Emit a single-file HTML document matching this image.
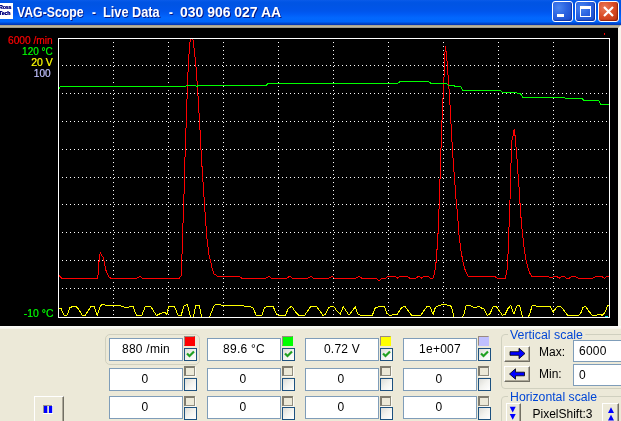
<!DOCTYPE html>
<html><head><meta charset="utf-8"><title>VAG-Scope</title>
<style>
html,body{margin:0;padding:0;}
body{width:621px;height:421px;overflow:hidden;position:relative;background:#ece9d8;font-family:"Liberation Sans",Arial,sans-serif;}
#tb{position:absolute;left:0;top:0;width:621px;height:25px;background:linear-gradient(to bottom,#0a5be8 0px,#0055e5 2px,#0054e3 4px,#0055eb 11px,#005bf5 14px,#0268fe 18px,#0066fb 21.5px,#0052dc 23px,#003cc0 24px,#0036b4 25px);}
#tb .t{position:absolute;top:4px;height:16px;line-height:16px;font-weight:bold;font-size:14px;color:#fff;white-space:nowrap;transform-origin:0 50%;text-shadow:1px 1px 0 #0a1883;}
#ico{position:absolute;left:0;top:3px;width:13px;height:16px;background:#fff;overflow:hidden;}
#ico span{position:absolute;left:-1px;font-size:5.4px;line-height:6px;font-weight:bold;color:#000080;white-space:nowrap;letter-spacing:-0.25px;text-shadow:0 0 .5px #000080}
.wb{position:absolute;top:1px;width:19px;height:19px;border:1px solid #fff;border-radius:3px;background:radial-gradient(circle at 30% 30%,#4a86f0 0%,#2a62e0 45%,#1848c8 100%);box-shadow:inset -1px -1px 1px rgba(0,20,120,.5);}
.wb.close{background:radial-gradient(circle at 30% 30%,#ea7a58 0%,#d84a24 50%,#b83010 100%);box-shadow:inset -1px -1px 1px rgba(90,10,0,.5);}
#edge{position:absolute;left:0;top:25px;width:621px;height:304px;background:#fff;}
#edge .top{position:absolute;left:0;top:0;width:621px;height:3px;background:linear-gradient(to bottom,#aaa48e 0,#aaa48e 1px,#bcb59e 1px,#bcb59e 2px,#a09a86 2px,#a09a86 3px);}
#edge .r{position:absolute;left:618px;top:0px;width:3px;height:304px;background:#f6f4ec;clip-path:polygon(100% 0,100% 100%,0 100%,0 3px);}
#edge .b{position:absolute;left:0;top:301px;width:621px;height:3px;background:linear-gradient(to bottom,#fdfdfa,#f4f2e8);}
#scope{position:absolute;left:0;top:28px;display:block}
.inp{position:absolute;width:72px;height:21px;border:1px solid #7f9db9;background:#fff;font-size:12px;line-height:20px;text-align:center;color:#000;letter-spacing:.25px;}
.sw{position:absolute;width:8px;height:7px;border-style:solid;border-width:2px 1px 1px 2px;border-color:#7f7c6f #918e80 #918e80 #7f7c6f;background:#ece9d8;box-shadow:1px 1px 0 #faf9f3;}
.cb{position:absolute;width:11px;height:11px;border:1px solid #1c5180;background:linear-gradient(135deg,#dcdcd7 0%,#f3f3ef 50%,#fff 100%);}
.cb svg{position:absolute;left:0;top:0}
.grp{position:absolute;border:1px solid #d0d0bf;border-radius:4px;}
.gl{position:absolute;font-size:12px;line-height:12px;color:#0046d5;background:#ece9d8;padding:0 2px;white-space:nowrap;transform-origin:0 50%;}
.lbl{position:absolute;font-size:12px;line-height:14px;color:#000;white-space:nowrap;}
.btn{position:absolute;background:#ece9d8;border:1px solid;border-color:#fff #716f64 #716f64 #fff;box-shadow:inset -1px -1px 0 #aca899;}
.btn svg{position:absolute;left:0;top:0}
#all{position:absolute;left:0;top:0;width:621px;height:421px;will-change:transform;}
</style></head><body><div id="all">
<div id="tb">
<div id="ico"><span style="top:0.8px">Ross</span><span style="top:7.1px">Tech</span></div>
<span class="t" style="left:17px;transform:scaleX(.875)">VAG-Scope</span>
<span class="t" style="left:92px;transform:scaleX(.85)">-</span>
<span class="t" style="left:102.6px;transform:scaleX(.91)">Live Data</span>
<span class="t" style="left:168.7px;transform:scaleX(.85)">-</span>
<span class="t" style="left:180px;transform:scaleX(.997)">030 906 027 AA</span>
<div class="wb" style="left:552px"><svg width="19" height="19"><rect x="4" y="12" width="7" height="3" fill="#fff"/></svg></div>
<div class="wb" style="left:575px"><svg width="19" height="19"><rect x="4.5" y="5.5" width="10" height="9" fill="none" stroke="#fff" stroke-width="1"/><rect x="4" y="4" width="11" height="3" fill="#fff"/></svg></div>
<div class="wb close" style="left:598px"><svg width="19" height="19"><path d="M5 5 L14 14 M14 5 L5 14" stroke="#fff" stroke-width="2.2" fill="none"/></svg></div>
</div>
<div id="edge"><div class="top"></div><div class="r"></div><div class="b"></div></div>
<svg id="scope" width="618" height="298" viewBox="0 28 618 298" shape-rendering="crispEdges">
<rect x="0" y="28" width="618" height="298" fill="#000"/>
<g stroke="#fff" stroke-width="1" stroke-dasharray="1 3" fill="none"><line x1="113.5" y1="42" x2="113.5" y2="317" /><line x1="168.5" y1="42" x2="168.5" y2="317" /><line x1="223.5" y1="42" x2="223.5" y2="317" /><line x1="278.5" y1="42" x2="278.5" y2="317" /><line x1="333.5" y1="42" x2="333.5" y2="317" /><line x1="388.5" y1="42" x2="388.5" y2="317" /><line x1="443.5" y1="42" x2="443.5" y2="317" /><line x1="498.5" y1="42" x2="498.5" y2="317" /><line x1="553.5" y1="42" x2="553.5" y2="317" /><line x1="62" y1="65.5" x2="609" y2="65.5" /><line x1="62" y1="93.5" x2="609" y2="93.5" /><line x1="62" y1="121.5" x2="609" y2="121.5" /><line x1="62" y1="149.5" x2="609" y2="149.5" /><line x1="62" y1="177.5" x2="609" y2="177.5" /><line x1="62" y1="204.5" x2="609" y2="204.5" /><line x1="62" y1="232.5" x2="609" y2="232.5" /><line x1="62" y1="260.5" x2="609" y2="260.5" /><line x1="62" y1="288.5" x2="609" y2="288.5" /></g>
<polyline fill="none" stroke="#ff0000" stroke-width="1" points="59.0,275.6 61.8,278.5 97.2,278.5 98.2,274.0 99.3,257.1 100.4,253.0 101.7,255.5 103.3,257.6 104.9,265.9 106.5,272.4 108.9,276.9 111.4,278.5 136.3,278.5 140.0,276.4 142.8,278.5 179.2,278.5 181.0,275.9 181.8,260.5 183.1,221.0 183.8,204.0 184.4,176.0 185.6,139.0 186.7,109.0 187.5,85.0 188.4,62.0 190.0,42.0 191.0,38.6 192.8,38.6 194.1,49.0 195.8,64.0 196.6,75.6 197.5,87.0 198.5,104.0 199.8,126.0 201.0,150.0 202.6,176.0 204.2,200.0 205.5,219.0 207.0,238.5 208.7,253.4 210.7,262.0 212.4,269.5 213.9,273.8 217.7,276.3 239.5,276.3 241.8,278.3 265.6,278.3 268.8,276.3 271.7,278.3 286.5,278.3 289.8,276.3 292.6,278.3 307.8,278.3 310.7,276.3 313.6,278.3 328.7,278.3 331.9,276.3 334.5,278.3 355.8,278.3 359.0,276.3 361.9,278.3 375.9,278.3 379.1,281.1 381.9,278.3 385.6,278.3 388.3,276.3 395.2,276.3 397.6,278.0 400.5,276.3 407.3,276.3 409.7,278.3 415.3,278.3 418.6,276.3 421.5,278.0 424.2,276.3 428.2,276.3 430.7,278.3 433.0,278.3 434.6,272.7 435.7,266.3 436.7,254.5 438.1,232.0 439.1,207.0 440.9,152.0 442.4,109.0 443.8,83.0 444.6,60.0 445.3,46.2 446.6,54.7 448.5,81.4 450.3,109.0 451.1,126.0 452.6,152.0 454.5,178.5 456.3,203.0 457.5,212.8 458.7,232.0 460.7,249.2 463.0,262.0 465.6,271.6 468.1,276.1 494.4,276.1 497.1,278.2 505.2,278.2 506.1,274.8 507.4,268.4 508.4,244.9 509.5,212.8 510.2,195.0 510.2,166.0 511.0,163.4 511.6,142.0 513.1,135.7 514.2,129.2 515.3,137.8 516.3,150.6 517.4,163.4 518.0,174.1 519.1,188.0 519.8,200.0 520.6,212.8 522.1,230.0 523.8,244.9 525.5,257.7 527.5,266.3 529.6,272.7 531.7,276.3 548.4,276.3 550.3,278.0 554.0,276.5 557.0,276.5 559.2,278.2 561.4,276.5 564.6,276.5 566.7,278.5 568.9,278.5 571.6,276.3 575.3,276.3 578.5,278.5 592.4,278.5 595.6,276.5 602.0,276.5 604.5,278.4 607.3,276.0 608.5,276.0"/>
<polyline fill="none" stroke="#00ff00" stroke-width="1" points="59.0,89.0 60.5,86.4 185.4,86.4 186.7,85.3 195.4,85.3 196.7,86.8 198.3,85.5 265.9,85.5 268.0,83.5 397.6,83.5 400.4,81.3 428.2,81.3 431.0,83.5 446.3,83.5 448.2,85.3 453.5,85.3 454.6,86.1 460.4,86.1 462.7,90.5 500.2,90.5 502.6,92.5 516.3,92.5 517.9,93.3 520.3,93.3 522.6,97.3 564.2,97.3 565.8,98.3 581.9,98.3 583.8,100.3 598.6,100.3 600.7,104.3 608.5,104.3"/>
<polyline fill="none" stroke="#ffff00" stroke-width="1" points="59.0,307.9 61.1,308.7 63.9,315.1 67.1,315.1 69.8,307.9 72.7,306.3 75.9,306.3 78.8,309.5 82.1,315.1 85.3,315.1 88.0,311.1 91.2,306.3 94.1,306.3 97.2,315.1 100.4,305.5 103.3,304.3 106.5,305.5 119.4,305.5 122.6,306.6 127.5,307.9 130.7,306.3 133.1,306.6 136.3,315.1 142.0,315.1 145.2,306.6 150.8,306.6 153.6,311.1 156.4,315.5 162.9,312.4 164.8,312.4 166.9,314.3 168.5,306.6 174.5,306.6 178.2,315.5 181.1,315.5 184.1,306.0 187.4,304.3 190.6,317.5 193.2,317.5 195.9,305.5 199.1,305.5 201.9,317.5"/><polyline fill="none" stroke="#ffff00" stroke-width="1" points="209.3,317.5 211.2,312.7 214.1,305.5 216.8,304.3 220.0,304.7 223.3,305.8 243.4,305.8 245.0,306.6 249.8,306.6 253.1,307.9 256.3,315.5 261.9,315.5 264.6,307.6 267.9,306.3 273.2,306.6 276.7,314.6 279.6,315.5 285.3,315.5 288.5,308.2 291.7,306.3 294.9,311.1 298.9,315.5 304.6,315.5 307.5,311.1 310.7,306.6 316.7,306.6 319.9,311.1 323.1,315.5 325.5,314.0 328.7,307.6 331.1,306.6 333.9,306.6 336.8,311.1 340.3,314.0 343.2,306.6 348.9,315.1 352.1,311.1 355.3,306.6 357.7,314.0 360.9,315.5 372.2,315.5 375.1,308.2 377.4,307.1 381.1,306.3 384.3,306.3 387.0,313.5 389.9,315.5 393.1,314.6 397.2,314.3 402.0,307.1 405.2,306.6 411.7,315.5 420.5,315.5 423.7,311.1 427.0,306.6 429.9,306.6 433.1,314.3 435.3,307.6 438.2,306.0 440.6,305.0 443.9,304.3 447.1,305.0 450.8,306.0 452.4,309.5 453.8,317.5"/><polyline fill="none" stroke="#ffff00" stroke-width="1" points="462.4,317.5 464.0,314.3 466.1,306.0 469.6,305.5 472.8,307.1 475.3,307.6 478.8,306.3 481.7,308.2 484.1,309.2 487.3,315.5 490.1,313.5 493.3,306.6 496.5,306.6 498.6,309.8 502.3,315.1 505.0,314.6 507.9,308.7 510.7,305.5 513.9,314.0 516.8,306.0 519.5,305.5 522.8,317.5"/><polyline fill="none" stroke="#ffff00" stroke-width="1" points="528.2,317.5 529.9,313.5 532.0,306.0 534.7,305.5 537.1,306.3 550.0,306.3 553.2,312.7 556.1,307.6 558.8,306.3 561.3,307.1 564.5,311.1 567.7,315.5 578.2,315.5 580.6,313.5 583.0,307.6 585.4,306.3 588.6,310.8 591.9,315.1 595.9,315.5 598.3,314.3 600.7,314.6 602.3,315.5 604.7,312.7 607.6,306.0 608.5,305.0"/>
<rect x="58.5" y="38.5" width="551" height="279" fill="none" stroke="#fff" stroke-width="1"/>
<rect x="604" y="33" width="1" height="2" fill="#f00"/>
<rect x="605" y="316" width="3" height="1" fill="#00e0e0"/>
<g font-family="'Liberation Sans', Arial, sans-serif" font-size="10" text-anchor="end" shape-rendering="auto" stroke-width="0.2">
<text x="52.8" y="43.5" fill="#ff0000" stroke="#ff0000" textLength="44.8" lengthAdjust="spacingAndGlyphs">6000 /min</text>
<text x="52.8" y="54.5" fill="#00ff00" stroke="#00ff00">120 °C</text>
<text x="52.8" y="65.5" fill="#ffff00" stroke="#ffff00" textLength="21.6" lengthAdjust="spacingAndGlyphs">20 V</text>
<text x="50.6" y="76.5" fill="#c0c0ff" stroke="#c0c0ff" textLength="16.8" lengthAdjust="spacingAndGlyphs">100</text>
<text x="53.4" y="316.5" fill="#00ff00" stroke="#00ff00" textLength="29.6" lengthAdjust="spacingAndGlyphs">-10 °C</text>
</g>
</svg>
<div class="grp" style="left:105px;top:334px;width:93px;height:29px;border-radius:5px"></div>
<div class="inp" style="left:109px;top:338px">880 /min</div><div class="sw" style="left:184px;top:336px;background:#ff0000;box-shadow:none;border-width:1px;width:9px;height:8px;border-color:#9a8a80 #ff0000 #ff0000 #9a8a80"></div><div class="cb" style="left:184px;top:348px"><svg width="11" height="11" viewBox="0 0 11 11"><path d="M2 4.5 L4.5 7 L9 2.5" fill="none" stroke="#21a121" stroke-width="2.2"/></svg></div><div class="inp" style="left:207px;top:338px">89.6 °C</div><div class="sw" style="left:282px;top:336px;background:#00ff00;box-shadow:none;border-width:1px;width:9px;height:8px;border-color:#9a8a80 #00ff00 #00ff00 #9a8a80"></div><div class="cb" style="left:282px;top:348px"><svg width="11" height="11" viewBox="0 0 11 11"><path d="M2 4.5 L4.5 7 L9 2.5" fill="none" stroke="#21a121" stroke-width="2.2"/></svg></div><div class="inp" style="left:305px;top:338px">0.72 V</div><div class="sw" style="left:380px;top:336px;background:#ffff00;box-shadow:none;border-width:1px;width:9px;height:8px;border-color:#9a8a80 #ffff00 #ffff00 #9a8a80"></div><div class="cb" style="left:380px;top:348px"><svg width="11" height="11" viewBox="0 0 11 11"><path d="M2 4.5 L4.5 7 L9 2.5" fill="none" stroke="#21a121" stroke-width="2.2"/></svg></div><div class="inp" style="left:403px;top:338px">1e+007</div><div class="sw" style="left:478px;top:336px;background:#c0c0ff;box-shadow:none;border-width:1px;width:9px;height:8px;border-color:#9a8a80 #c0c0ff #c0c0ff #9a8a80"></div><div class="cb" style="left:478px;top:348px"><svg width="11" height="11" viewBox="0 0 11 11"><path d="M2 4.5 L4.5 7 L9 2.5" fill="none" stroke="#21a121" stroke-width="2.2"/></svg></div><div class="inp" style="left:109px;top:368px;text-indent:-2px">0</div><div class="sw" style="left:184px;top:366px"></div><div class="cb" style="left:184px;top:378px"></div><div class="inp" style="left:207px;top:368px;text-indent:-2px">0</div><div class="sw" style="left:282px;top:366px"></div><div class="cb" style="left:282px;top:378px"></div><div class="inp" style="left:305px;top:368px;text-indent:-2px">0</div><div class="sw" style="left:380px;top:366px"></div><div class="cb" style="left:380px;top:378px"></div><div class="inp" style="left:403px;top:368px;text-indent:-2px">0</div><div class="sw" style="left:478px;top:366px"></div><div class="cb" style="left:478px;top:378px"></div><div class="inp" style="left:109px;top:396px;text-indent:-2px">0</div><div class="sw" style="left:184px;top:396px"></div><div class="cb" style="left:184px;top:407px"></div><div class="inp" style="left:207px;top:396px;text-indent:-2px">0</div><div class="sw" style="left:282px;top:396px"></div><div class="cb" style="left:282px;top:407px"></div><div class="inp" style="left:305px;top:396px;text-indent:-2px">0</div><div class="sw" style="left:380px;top:396px"></div><div class="cb" style="left:380px;top:407px"></div><div class="inp" style="left:403px;top:396px;text-indent:-2px">0</div><div class="sw" style="left:478px;top:396px"></div><div class="cb" style="left:478px;top:407px"></div>
<div class="btn" style="left:34px;top:396px;width:28px;height:30px"><svg width="28" height="30"><rect x="8.5" y="8.5" width="9" height="8" fill="none" stroke="#fff" stroke-width="1"/><rect x="8.5" y="8.5" width="8" height="7" fill="#ece9d8" stroke="#9a978a" stroke-width="1"/><rect x="9" y="9" width="3.5" height="7" fill="#0000ff"/><rect x="13.8" y="9" width="3.4" height="7" fill="#0000ff"/><rect x="12.5" y="9" width="1.3" height="7" fill="#ece9d8"/></svg></div>
<div class="grp" style="left:501px;top:334px;width:130px;height:53px"></div>
<span class="gl" style="left:507.5px;top:329px;transform:scaleX(1.03)">Vertical scale</span>
<div class="grp" style="left:501px;top:396px;width:130px;height:53px"></div>
<span class="gl" style="left:507.5px;top:391px;transform:scaleX(1.02)">Horizontal scale</span>
<div class="btn" style="left:504px;top:346px;width:24px;height:14px"><svg width="24" height="14"><path d="M5 4.7 H14 V1.3 L20 6.5 L14 11.7 V8.3 H5 Z" fill="#0000ff" stroke="#000" stroke-width=".8"/></svg></div>
<div class="btn" style="left:504px;top:366px;width:24px;height:14px"><svg width="24" height="14"><path d="M19.5 5.2 H10.5 V1.8 L4.5 7 L10.5 12.2 V8.8 H19.5 Z" fill="#0000ff" stroke="#000" stroke-width=".8"/></svg></div>
<span class="lbl" style="left:539px;top:345px">Max:</span>
<span class="lbl" style="left:539px;top:367px">Min:</span>
<div class="inp" style="left:573px;top:340px;width:60px;height:20px;text-align:left;padding-left:5px;line-height:21px">6000</div>
<div class="inp" style="left:573px;top:364px;width:60px;height:20px;text-align:left;padding-left:5px;line-height:20px">0</div>
<div class="btn" style="left:506px;top:403px;width:13px;height:20px"><svg width="13" height="20"><path d="M2.7 2.7 H8.7 L5.7 8.5 Z M2.7 10 H8.7 L5.7 15.8 Z" fill="#0000ff"/></svg></div>
<span class="lbl" style="left:532.5px;top:406.5px">PixelShift:3</span>
<div class="btn" style="left:602px;top:403px;width:15px;height:20px"><svg width="15" height="20"><path d="M5 9 H11 L8 3.2 Z M5 16.5 H11 L8 10.7 Z" fill="#0000ff"/></svg></div>
</div></body></html>
